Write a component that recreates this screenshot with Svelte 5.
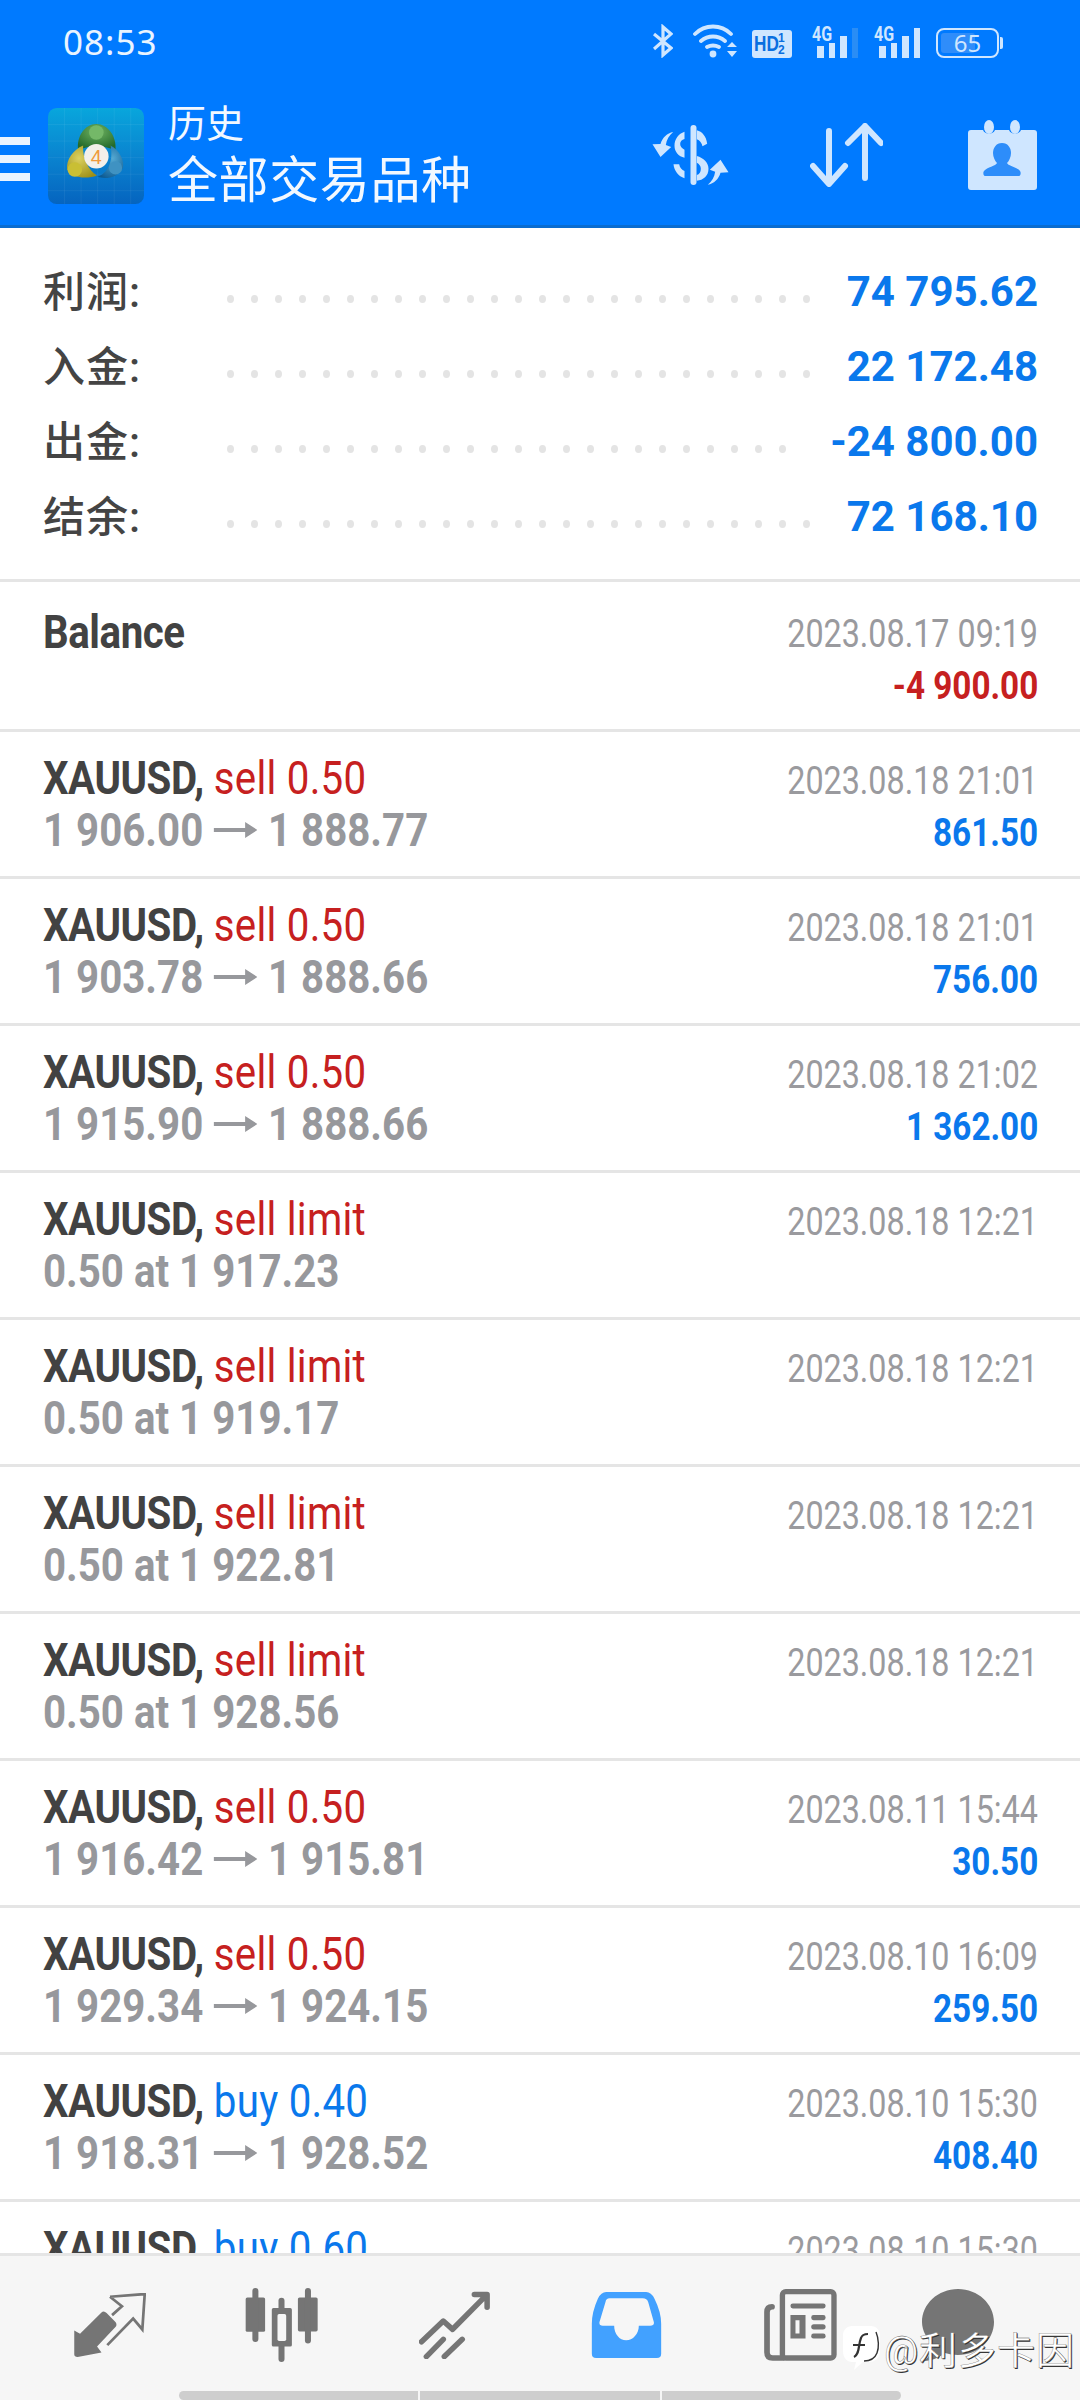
<script lang="ts">
  interface Row {
    name: string;
    action?: string;
    kind?: 'sell' | 'buy';
    open?: string;
    close?: string;
    order?: string;
    time: string;
    profit?: string;
    loss?: boolean;
  }

  const summary = [
    { label: '利润:', value: '74 795.62', dots: 25 },
    { label: '入金:', value: '22 172.48', dots: 25 },
    { label: '出金:', value: '-24 800.00', dots: 24 },
    { label: '结余:', value: '72 168.10', dots: 25 }
  ];

  const rows: Row[] = [
    { name: 'Balance', time: '2023.08.17 09:19', profit: '-4 900.00', loss: true },
    { name: 'XAUUSD,', action: 'sell 0.50', kind: 'sell', open: '1 906.00', close: '1 888.77', time: '2023.08.18 21:01', profit: '861.50' },
    { name: 'XAUUSD,', action: 'sell 0.50', kind: 'sell', open: '1 903.78', close: '1 888.66', time: '2023.08.18 21:01', profit: '756.00' },
    { name: 'XAUUSD,', action: 'sell 0.50', kind: 'sell', open: '1 915.90', close: '1 888.66', time: '2023.08.18 21:02', profit: '1 362.00' },
    { name: 'XAUUSD,', action: 'sell limit', kind: 'sell', order: '0.50 at 1 917.23', time: '2023.08.18 12:21' },
    { name: 'XAUUSD,', action: 'sell limit', kind: 'sell', order: '0.50 at 1 919.17', time: '2023.08.18 12:21' },
    { name: 'XAUUSD,', action: 'sell limit', kind: 'sell', order: '0.50 at 1 922.81', time: '2023.08.18 12:21' },
    { name: 'XAUUSD,', action: 'sell limit', kind: 'sell', order: '0.50 at 1 928.56', time: '2023.08.18 12:21' },
    { name: 'XAUUSD,', action: 'sell 0.50', kind: 'sell', open: '1 916.42', close: '1 915.81', time: '2023.08.11 15:44', profit: '30.50' },
    { name: 'XAUUSD,', action: 'sell 0.50', kind: 'sell', open: '1 929.34', close: '1 924.15', time: '2023.08.10 16:09', profit: '259.50' },
    { name: 'XAUUSD,', action: 'buy 0.40', kind: 'buy', open: '1 918.31', close: '1 928.52', time: '2023.08.10 15:30', profit: '408.40' },
    { name: 'XAUUSD,', action: 'buy 0.60', kind: 'buy', time: '2023.08.10 15:30' }
  ];
</script>

<div class="screen">
  <header class="top">
    <div class="status">
      <span class="clock">08:53</span>
      <div class="status-icons">
        <svg class="bt" width="20" height="34" viewBox="0 0 20 34" fill="none" stroke="#cfe6ff" stroke-width="3.2"><path d="M1 10l17 14-8 7V3l8 7L1 25" /></svg>
        <svg class="wifi" width="44" height="34" viewBox="0 0 44 34" fill="none" stroke="#cfe6ff" stroke-width="3.8" stroke-linecap="round"><path d="M2 10c10-10 26-10 36 0M8 17c7-6 17-6 24 0M14 23c4-2 8-2 12 0" /><circle cx="20" cy="30" r="3.4" fill="#cfe6ff" stroke="none" /><path d="M34 23l5-5 5 5zM34 27l5 6 5-6z" fill="#cfe6ff" stroke="none" /></svg>
        <span class="hd"><span class="hd-text">HD</span><small>1<br />2</small></span>
        <span class="sig"><i class="g">4G</i><b class="b1"></b><b class="b2"></b><b class="b3"></b><b class="b4 dim"></b></span>
        <span class="sig"><i class="g">4G</i><b class="b1"></b><b class="b2"></b><b class="b3"></b><b class="b4"></b></span>
        <span class="battery">
          <span class="batt"><span class="fill"></span><span class="pct">65</span></span>
          <span class="nub"></span>
        </span>
      </div>
    </div>
    <div class="appbar">
      <div class="burger"><span></span><span></span><span></span></div>
      <div class="logo">
        <svg width="96" height="96" viewBox="24 24 290 290">
          <defs>
            <linearGradient id="bg" x1="0" y1="0" x2="0" y2="1"><stop offset="0" stop-color="#08a6dc" /><stop offset=".5" stop-color="#0a84d0" /><stop offset="1" stop-color="#0564bf" /></linearGradient>
            <radialGradient id="gr" cx=".5" cy=".3" r=".7"><stop offset="0" stop-color="#6fb262" /><stop offset="1" stop-color="#236a2a" /></radialGradient>
            <radialGradient id="ye" cx=".4" cy=".4" r=".7"><stop offset="0" stop-color="#dcd160" /><stop offset="1" stop-color="#9c8e14" /></radialGradient>
            <radialGradient id="bl" cx=".6" cy=".4" r=".7"><stop offset="0" stop-color="#55a9d2" /><stop offset="1" stop-color="#0c5a92" /></radialGradient>
          </defs>
          <rect x="24" y="24" width="290" height="290" rx="26" fill="url(#bg)" />
          <path d="M24 74h290M24 124h290M24 174h290M24 224h290M24 274h290M74 24v290M124 24v290M174 24v290M224 24v290M274 24v290" stroke="#fff" stroke-opacity=".09" stroke-width="2" />
          <path d="M170 72c35 0 62 38 58 78l-38-10h-40l-35 10c-5-40 20-78 55-78z" fill="url(#gr)" />
          <path d="M130 137c-30 13-52 43-48 73 13 25 58 30 90 18-27-18-44-53-42-91z" fill="url(#ye)" />
          <path d="M213 137c27 13 43 48 37 68-15 30-50 35-78 27 33-10 50-47 41-95z" fill="url(#bl)" />
          <circle cx="170" cy="98" r="22" fill="#74b868" />
          <circle cx="105" cy="210" r="22" fill="#c9bf34" />
          <circle cx="228" cy="205" r="20" fill="#3f92c2" />
          <circle cx="170" cy="170" r="37" fill="#f3f0ea" />
          <text x="170" y="192" text-anchor="middle" class="logo4">4</text>
        </svg>
      </div>
      <div class="titles">
        <span class="t1">历史</span>
        <span class="t2">全部交易品种</span>
      </div>
      <div class="actions">
        <svg width="79" height="60" viewBox="322 372 228 180" fill="#cfe6ff">
          <rect x="436" y="372" width="18" height="180" rx="9" />
          <path d="M455 388c16 4 28 18 31 40l-14 8c-2-10-8-18-17-21z" />
          <path d="M418 392c-18 6-30 22-30 42 0 18 12 32 30 36v-24c-8-4-13-10-13-17s5-13 13-15z" />
          <path d="M455 465c20 6 35 20 35 38 0 22-16 34-35 36v-17c8-2 12-10 12-19 0-8-5-15-12-18z" />
          <path d="M385 490c2 20 15 36 33 42v-22c-8-3-14-9-16-20z" />
          <path d="M384 393c-18 4-32 16-38 36l-24 1 24 38 32-30-16-6c2-16 10-29 22-39z" />
          <path d="M384 393c-18 4-32 16-38 36l-24 1 24 38 32-30-16-6c2-16 10-29 22-39z" transform="rotate(180 436 472)" />
        </svg>
        <svg class="updown" width="73" height="64" viewBox="0 0 73 64" fill="none" stroke="#cfe6ff" stroke-width="6" stroke-linecap="round" stroke-linejoin="round"><path d="M19 8v52M3 43l16 18 16-18M55 3v52M38 20L55 3l16 17" /></svg>
        <svg class="cal" width="69" height="70" viewBox="0 0 69 70" fill="#cfe6ff"><path d="M3 10h12c2 5 10 5 12 0h14c2 5 10 5 12 0h13c2 0 3 1 3 3v54c0 2-1 3-3 3H3c-2 0-3-1-3-3V13c0-2 1-3 3-3z" /><ellipse cx="21" cy="7" rx="5" ry="7" /><ellipse cx="47" cy="7" rx="5" ry="7" /><path fill="#2d8dfa" d="M34 23c6 0 9 5 9 10 0 4-2 8-4 10 1 3 10 4 13 8 1 1 1 5-1 5H17c-2 0-2-4-1-5 3-4 12-5 13-8-2-2-4-6-4-10 0-5 3-10 9-10z" /></svg>
      </div>
    </div>
  </header>

  <section class="summary">
    {#each summary as item}
      <div class="sum-row">
        <span class="sum-label">{item.label}</span>
        <span class="dots">
          {#each Array(item.dots) as _}<i></i>{/each}
        </span>
        <span class="sum-value">{item.value}</span>
      </div>
    {/each}
  </section>

  <main class="list">
    {#each rows as row}
      <article class="row">
        <div class="left">
          <div class="line1 squeeze">
            <b>{row.name}</b>
            {#if row.action}<span class={row.kind}>{row.action}</span>{/if}
          </div>
          {#if row.open}
            <div class="line2 squeeze">
              {row.open}<svg class="arrow" width="50" height="16" viewBox="0 0 50 16" fill="#97989c"><path d="M0 6h36V0l14 8-14 8v-6H0z" /></svg>{row.close}
            </div>
          {:else if row.order}
            <div class="line2 squeeze">{row.order}</div>
          {/if}
        </div>
        <div class="right">
          <div class="time squeeze end">{row.time}</div>
          {#if row.profit}<div class="profit squeeze end" class:loss={row.loss}>{row.profit}</div>{/if}
        </div>
      </article>
    {/each}
  </main>

  <footer class="tabs">
    <div class="tab-icons">
      <svg width="72" height="64" viewBox="215 225 210 188" fill="#757575">
        <path d="M215 335l17 10 63-63q7-6 15 2l26 26q6 8 0 15l-54 57 13 18-70 13q-10 0-10-8z" />
        <path fill="none" stroke="#757575" stroke-width="8" d="M320 236l102-8-7 104-27-32-76 78M320 236l35 28-29 26" />
      </svg>
      <svg width="75" height="74" viewBox="708 207 218 221" fill="#757575">
        <rect x="710" y="235" width="58" height="103" rx="5" />
        <rect x="730" y="207" width="18" height="161" rx="9" />
        <rect x="866" y="235" width="59" height="102" rx="5" />
        <rect x="887" y="207" width="18" height="166" rx="9" />
        <rect x="808" y="236" width="18" height="192" rx="9" />
        <rect x="788" y="267" width="60" height="115" rx="5" />
        <rect x="805" y="285" width="26" height="80" rx="5" fill="#f6f6f6" />
      </svg>
      <svg width="71" height="68" viewBox="1215 215 205 197" fill="none" stroke="#757575" stroke-width="16" stroke-linecap="round" stroke-linejoin="round">
        <path d="M1222 362l63-60 27 24 93-94M1375 225h37v37M1285 355l-49 50M1340 355l-52 50" />
      </svg>
      <svg width="71" height="66" viewBox="147 215 208 198" fill="#42a1ff">
        <path fill-rule="evenodd" d="M190 215h120q15 0 25 20 20 40 20 75v90q0 13-13 13H160q-13 0-13-13v-90q0-35 18-75 10-20 25-20zM200 234q-10 0-12 11l-18 60q-2 11 10 11h34c0 24 16 44 36 44s38-20 38-44h34q13 0 11-11l-17-60q-4-11-16-11z" />
      </svg>
      <svg width="75" height="72" viewBox="647 207 216 215" fill="#757575">
        <rect x="701" y="215" width="154" height="198" rx="10" fill="none" stroke="#757575" stroke-width="16" />
        <path fill="none" stroke="#757575" stroke-width="17" stroke-linecap="round" d="M670 260q-15 0-15 16v120q0 17 17 17h30" />
        <rect x="725" y="250" width="105" height="15" rx="7" />
        <path fill-rule="evenodd" d="M725 285h45v70h-45zM740 300v40h12v-40z" />
        <rect x="787" y="285" width="43" height="15" rx="7" />
        <rect x="787" y="312" width="43" height="16" rx="8" />
        <rect x="787" y="340" width="43" height="15" rx="7" />
      </svg>
      <svg class="chat" width="72" height="72" viewBox="0 0 72 72" fill="#757575"><path d="M36 0c20 0 36 15 36 33S56 66 36 66c-5 0-9-1-13-2-5 4-13 8-21 8 5-4 9-10 10-16C5 50 0 42 0 33 0 15 16 0 36 0z" /></svg>
    </div>
    <div class="scrollbar"><span></span><span></span><span></span></div>
    <div class="watermark">
      <svg width="37" height="44" viewBox="0 0 37 44"><path d="M9 0h19c5 0 9 4 9 9v16c0 7-5 11-11 11h-6l-9 8 2-8H9c-5 0-9-4-9-11V9c0-5 4-9 9-9z" fill="#fff" /><path d="M11 31c6-3 4-12 7-19 1-3 3-4 7-4M10 19h12" fill="none" stroke="#333" stroke-width="2.2" /><path d="M33 6c3 7 3 16 1 21-2 5-7 8-13 8" fill="none" stroke="#333" stroke-width="1.4" /></svg>
      <span>@利多卡因</span>
    </div>
  </footer>
</div>

<style>
  :global(body) {
    margin: 0;
    background: #fff;
  }

  .screen {
    width: 1080px;
    height: 2400px;
    overflow: hidden;
    display: flex;
    flex-direction: column;
    font-family: Roboto, 'Noto Sans CJK SC', sans-serif;
  }

  /* Blue header */
  .top {
    height: 228px;
    flex: none;
    box-sizing: border-box;
    background: #007aff;
    border-bottom: 3px solid #0a6cd0;
    color: #fff;
  }

  .status {
    height: 92px;
    box-sizing: border-box;
    padding: 22px 77px 0 63px;
    display: flex;
    justify-content: space-between;
    align-items: flex-start;
  }

  .clock {
    font-family: 'Noto Sans', sans-serif;
    font-size: 35px;
    line-height: 40px;
    letter-spacing: 1px;
    color: #eaf4ff;
  }

  .status-icons {
    display: flex;
    align-items: flex-end;
    height: 34px;
    margin-top: 2px;
    color: #cfe6ff;
  }

  .wifi {
    margin-left: 20px;
  }

  .hd {
    margin-left: 15px;
    width: 40px;
    height: 28px;
    box-sizing: border-box;
    border-radius: 3px;
    background: #cfe6ff;
    color: #0a6fe0;
    padding-left: 2px;
    display: flex;
    gap: 1px;
    font-family: 'Liberation Sans', sans-serif;
    font-weight: 700;
  }

  .hd-text {
    display: block;
    width: 23px;
    font-size: 22px;
    line-height: 28px;
    transform: scaleX(0.78);
    transform-origin: left;
  }

  .hd small {
    font-size: 12px;
    line-height: 12px;
    padding-top: 2px;
  }

  .sig {
    display: flex;
    align-items: flex-end;
    justify-content: flex-end;
    gap: 5px;
    width: 46px;
    height: 32px;
    position: relative;
    margin-left: 20px;
  }

  .sig + .sig {
    margin-left: 16px;
  }

  .sig b {
    width: 6.5px;
    flex: none;
    background: #cfe6ff;
  }

  .sig .b1 { height: 12px; }
  .sig .b2 { height: 15px; }
  .sig .b3 { height: 22px; }
  .sig .b4 { height: 30px; }

  .sig b.dim {
    background: #2a8df5;
  }

  .g {
    position: absolute;
    left: 0;
    top: -1px;
    font-size: 20px;
    line-height: 18px;
    font-weight: 700;
    font-style: normal;
    transform: scaleX(0.8);
    transform-origin: left;
    background: #007aff;
    padding-right: 1px;
  }

  .battery {
    display: flex;
    align-items: center;
    margin-left: 16px;
  }

  .batt {
    width: 63px;
    height: 30px;
    box-sizing: border-box;
    border: 2px solid #cfe6ff;
    border-radius: 8px;
    position: relative;
    display: block;
  }

  .fill {
    position: absolute;
    left: 3px;
    top: 3px;
    bottom: 3px;
    width: 34px;
    background: #2f8dfa;
    border-radius: 3px;
  }

  .pct {
    position: absolute;
    inset: -2px 0;
    text-align: center;
    font-family: 'Noto Sans', sans-serif;
    font-size: 24px;
    line-height: 30px;
  }

  .nub {
    width: 3px;
    height: 12px;
    margin-left: 1px;
    background: #cfe6ff;
    border-radius: 0 2px 2px 0;
  }

  .appbar {
    display: flex;
    align-items: center;
    height: 133px;
  }

  .burger {
    width: 30px;
    display: flex;
    flex-direction: column;
    gap: 10px;
  }

  .burger span {
    height: 8px;
    background: #eaf4ff;
  }

  .logo {
    margin: -5px 0 0 18px;
    height: 96px;
  }

  .logo4 {
    font-family: 'Liberation Sans', sans-serif;
    font-size: 60px;
    fill: #ef9a3c;
  }

  .titles {
    margin: 0 0 0 24px;
    display: flex;
    flex-direction: column;
    color: #f2f8ff;
  }

  .t1 {
    font-size: 38px;
    line-height: 44px;
  }

  .t2 {
    font-size: 50px;
    line-height: 70px;
    letter-spacing: 0.6px;
  }

  .actions {
    margin: -7px 0 0 auto;
    display: flex;
    align-items: center;
    padding-right: 43px;
  }

  .updown {
    margin-left: 80px;
  }

  .cal {
    margin-left: 85px;
  }

  /* Summary block */
  .summary {
    height: 351px;
    flex: none;
    box-sizing: border-box;
    padding: 23px 42px 0 43px;
  }

  .sum-row {
    display: flex;
    align-items: center;
    height: 75px;
  }

  .sum-label {
    width: 184px;
    font-size: 42px;
    font-weight: 500;
    letter-spacing: 1px;
    color: #444;
  }

  .sum-value {
    margin: 6px 0 0 auto;
    font-size: 42px;
    font-weight: 700;
    color: #0a78ec;
  }

  .dots {
    display: flex;
    gap: 17px;
    padding-top: 20px;
    height: 8px;
  }

  .dots i {
    width: 7px;
    height: 8px;
    border-radius: 50%;
    background: #e4e4e4;
  }

  .squeeze {
    display: inline-block;
    white-space: nowrap;
    transform: scaleX(0.875);
    transform-origin: left center;
  }

  .squeeze.end {
    transform-origin: right center;
  }

  /* History rows */
  .list {
    flex: 1;
    min-height: 0;
    overflow: hidden;
  }

  .row {
    box-sizing: border-box;
    height: 147px;
    border-top: 3px solid #e5e5e5;
    padding: 0 42px 0 43px;
    display: flex;
    justify-content: space-between;
  }

  .row:first-child {
    height: 150px;
    padding-top: 3px;
  }

  .row:first-child .line1 {
    margin-top: 21px;
  }

  .left,
  .right {
    display: flex;
    flex-direction: column;
  }

  .right {
    align-items: flex-end;
  }

  .line1 {
    font-size: 46px;
    line-height: 52px;
    margin-top: 20px;
  }

  .line1 b {
    font-weight: 700;
    letter-spacing: -0.5px;
    color: #424242;
  }

  .line1 span {
    letter-spacing: 0.3px;
  }

  .sell {
    color: #c62020;
  }

  .buy {
    color: #0a78ec;
  }

  .line2 {
    font-size: 46px;
    font-weight: 700;
    line-height: 52px;
    color: #97989c;
  }

  .arrow {
    margin: 0 12px 0 12px;
    vertical-align: 8px;
  }

  .time {
    font-size: 38px;
    line-height: 44px;
    margin-top: 27px;
    color: #9a9a9e;
    transform: scaleX(0.85);
  }

  .profit {
    font-size: 38px;
    font-weight: 700;
    line-height: 44px;
    margin-top: 8px;
    color: #0a78ec;
  }

  .profit.loss {
    color: #c62020;
  }

  /* Bottom tabs */
  .tabs {
    height: 147px;
    flex: none;
    box-sizing: border-box;
    background: #f6f6f6;
    border-top: 3px solid #e5e5e5;
    position: relative;
  }

  .tab-icons {
    display: flex;
    align-items: center;
    gap: 100px;
    height: 135px;
    padding: 2px 0 0 74px;
    box-sizing: border-box;
  }

  .tab-icons svg:nth-child(2) {
    margin-left: -2px;
  }

  .tab-icons svg:nth-child(4),
  .tab-icons svg:nth-child(5) {
    margin-left: 1px;
  }

  .tab-icons .chat {
    margin-left: -16px;
  }

  .scrollbar {
    display: flex;
    gap: 2px;
    margin-left: 179px;
    width: 722px;
    height: 9px;
  }

  .scrollbar span {
    flex: 1;
    background: #cecece;
  }

  .scrollbar span:first-child {
    border-radius: 5px 0 0 5px;
  }

  .scrollbar span:last-child {
    border-radius: 0 5px 5px 0;
  }

  .watermark {
    position: absolute;
    left: 843px;
    top: 64px;
    display: flex;
    align-items: center;
    gap: 4px;
    color: #fff;
    font-size: 38px;
    letter-spacing: 1px;
    -webkit-text-stroke: 0.3px #444;
    text-shadow: 1px 1px 0 #333;
  }
</style>
